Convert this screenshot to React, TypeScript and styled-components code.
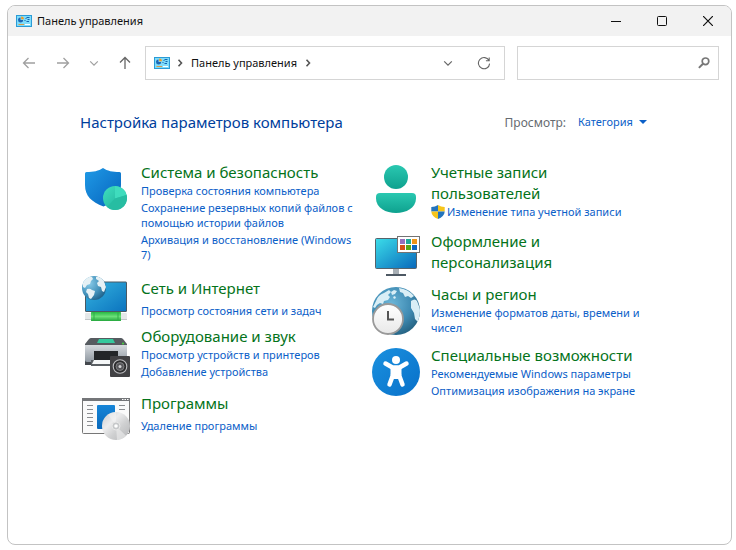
import React from "react";
import styled, { createGlobalStyle } from "styled-components";

const GlobalStyle = createGlobalStyle`
  * { box-sizing: border-box; }
  body {
    margin: 0;
    background: #ffffff;
    color: #111111;
    font-family: "Noto Sans", "Open Sans", sans-serif;
    font-size: 11px;
  }
  button, input, select { font: inherit; color: inherit; }
`;

const Window = styled.div`
  margin: 5px 4px 5px 7px;
  min-height: calc(100vh - 10px);
  border: 1px solid #c3c3c3;
  border-radius: 8px;
  overflow: hidden;
  background: #ffffff;
`;

const TitleBar = styled.header`
  display: flex;
  align-items: center;
  height: 30px;
  padding-left: 8px;
  background: #f2f2f2;
`;

const WindowTitle = styled.h1`
  flex: 1;
  margin: 0 0 0 5px;
  font-size: 11px;
  line-height: 16px;
  font-weight: 400;
`;

const CaptionButton = styled.button`
  display: grid;
  place-items: center;
  width: 46px;
  height: 30px;
  padding: 0;
  border: 0;
  background: transparent;
`;

const Toolbar = styled.div`
  display: flex;
  align-items: center;
  padding: 10px 12px 10px 7px;
`;

const NavButtons = styled.div`
  display: flex;
  align-items: center;
  gap: 6px;
  margin-right: 6px;
`;

const NavButton = styled.button<{ $narrow?: boolean; $active?: boolean }>`
  display: grid;
  place-items: center;
  width: ${(p) => (p.$narrow ? "22px" : "28px")};
  height: 28px;
  padding: 0;
  border: 0;
  background: transparent;
  color: ${(p) => (p.$active ? "#666666" : "#a0a0a0")};
`;

const AddressBar = styled.nav`
  display: flex;
  flex: 1 1 360px;
  align-items: center;
  height: 34px;
  padding: 0 6px 0 8px;
  border: 1px solid #d5d5d5;
`;

const CrumbArrow = styled.span`
  display: grid;
  place-items: center;
  width: 20px;
  color: #555555;
`;

const Crumb = styled.a`
  padding: 0 1px;
  line-height: 16px;
  color: #111111;
  text-decoration: none;
`;

const AddressActions = styled.div`
  display: flex;
  gap: 8px;
  margin-left: auto;
`;

const SearchBox = styled.label`
  display: flex;
  flex: 0 1 202px;
  align-items: center;
  height: 34px;
  margin-left: 12px;
  padding: 0 8px;
  border: 1px solid #d5d5d5;
  color: #777777;
`;

const SearchInput = styled.input`
  flex: 1;
  min-width: 0;
  border: 0;
  outline: 0;
  background: transparent;
  color: #111111;
`;

const Content = styled.main`
  max-width: 664px;
  padding: 20px 12px 24px 72px;
`;

const ContentHeader = styled.div`
  display: flex;
  align-items: center;
  justify-content: space-between;
  min-height: 24px;
  margin-bottom: 28px;
  padding-right: 13px;
`;

const Heading = styled.h2`
  margin: 0;
  color: #003e9c;
  font-size: 15px;
  line-height: 24px;
  font-weight: 400;
`;

const ViewPicker = styled.label`
  display: flex;
  align-items: center;
  gap: 12px;
  color: #666b70;
  font-size: 12px;
`;

const ViewSelectWrap = styled.span`
  display: flex;
  align-items: center;
  gap: 6px;
  color: #0b60c8;
  font-size: 11px;
`;

const ViewSelect = styled.select`
  appearance: none;
  padding: 0;
  border: 0;
  background: transparent;
  line-height: 16px;
`;

const Columns = styled.div`
  display: grid;
  grid-template-columns: repeat(2, minmax(0, 290px));
  align-items: start;
`;

const Column = styled.div`
  display: flex;
  flex-direction: column;
`;

const CategoryRow = styled.section<{ $centered?: boolean; $after: number }>`
  display: flex;
  align-items: ${(p) => (p.$centered ? "center" : "flex-start")};
  gap: 9px;
  margin-bottom: ${(p) => p.$after}px;
  padding-right: 8px;
`;

const IconSlot = styled.div<{ $flush?: boolean }>`
  flex: none;
  width: 52px;
  margin-top: ${(p) => (p.$flush ? "0" : "3px")};
  height: 48px;
  svg { display: block; margin: 0 auto; }
`;

const CategoryText = styled.div`
  min-width: 0;
`;

const CategoryTitle = styled.h3`
  margin: 0;
  font-size: 15px;
  line-height: 21px;
  font-weight: 400;
`;

const TitleLink = styled.a`
  color: #04731a;
  text-decoration: none;
`;

const TaskList = styled.ul<{ $spaced?: boolean }>`
  display: grid;
  gap: 2px;
  margin: ${(p) => (p.$spaced ? "4px" : "0")} 0 0;
  padding: 0;
  list-style: none;
`;

const Task = styled.li`
  display: flex;
  align-items: center;
  gap: 2px;
  line-height: 15px;
`;

const TaskLink = styled.a`
  color: #0b60c8;
  text-decoration: none;
`;

const PanelIcon = () => (
  <svg width="16" height="12" viewBox="0 0 16 12" aria-hidden="true">
    <rect width="16" height="12" fill="#2a9bd6" />
    <rect x="1" y="1" width="14" height="10" fill="#7fdcfa" />
    <path d="M4.500 2.400a2.600 2.600 0 1 0 2.700 2.700H4.500z" fill="#1c67b5" />
    <path d="M5.200 1.600v2.700h2.700A2.700 2.700 0 0 0 5.200 1.600z" fill="#f39a1f" />
    <path d="M8.500 5.500h1M9.500 3.500h1M10.500 2.500h3M11.500 4.500h2M10.500 6.500h2.500" stroke="#1466b0" />
    <path d="M2.500 9.500H8" stroke="#d99a45" />
    <path d="M9 9.500h5" stroke="#ffffff" />
  </svg>
);

const Chevron = ({ down }: { down?: boolean }) => (
  <svg width="10" height="10" viewBox="0 0 10 10" fill="none" stroke="currentColor" strokeWidth={down ? 1.2 : 1.6} aria-hidden="true">
    <path d={down ? "M1.200 3.300 5 7.100l3.800-3.800" : "m3.500 1.800 3 3.200-3 3.200"} />
  </svg>
);

const Arrow = ({ dir }: { dir: "left" | "right" | "up" }) => (
  <svg width="14" height="14" viewBox="0 0 14 14" fill="none" stroke="currentColor" strokeWidth="1.300" aria-hidden="true">
    {dir === "left" && <path d="M13 7H1.500M6.500 2l-5 5 5 5" />}
    {dir === "right" && <path d="M1 7h11.500M7.500 2l5 5-5 5" />}
    {dir === "up" && <path d="M7 13V1.500M2 6.500l5-5 5 5" />}
  </svg>
);

const RefreshIcon = () => (
  <svg width="14" height="14" viewBox="0 0 14 14" fill="none" stroke="currentColor" strokeWidth="1.100" aria-hidden="true">
    <path d="M12 4.600A5.600 5.600 0 1 0 12.600 7.600M12.200 1.500v3.300H8.900" />
  </svg>
);

const MagnifierIcon = () => (
  <svg width="12" height="12" viewBox="0 0 12 12" fill="none" stroke="currentColor" aria-hidden="true">
    <circle cx="7.500" cy="4.300" r="3.300" strokeWidth="1.700" />
    <path d="M5 6.800.900 10.900" strokeWidth="2" />
  </svg>
);

const ShieldIcon = () => (
  <svg width="48" height="48" viewBox="0 0 48 48" aria-hidden="true">
    <defs>
      <linearGradient id="shieldBlue" x1="0" y1="0" x2="1" y2="1">
        <stop offset="0" stopColor="#1f9ae6" /><stop offset="1" stopColor="#0663bd" />
      </linearGradient>
      <linearGradient id="discTeal" x1="0" y1="0" x2="1" y2="1">
        <stop offset="0" stopColor="#3fe0c0" /><stop offset="1" stopColor="#1cab95" />
      </linearGradient>
    </defs>
    <path d="M21 3c4.500 3 9.500 4 16.500 4q1.500 0 1.500 1.500V20C39 31 32.500 37 21.500 41.500 9.500 37 3 31 3 20V8.500Q3 7 4.500 7C11.500 7 16.500 6 21 3z" fill="url(#shieldBlue)" />
    <circle cx="33" cy="33" r="12" fill="url(#discTeal)" />
    <path d="M33 21a12 12 0 0 1 11.600 9L33 33.500z" fill="#3fdcbd" />
    <path d="M33 33.500 44.600 30A12 12 0 0 1 25 42z" fill="#27bda2" />
  </svg>
);

const NetworkIcon = () => (
  <svg width="48" height="48" viewBox="0 0 48 48" aria-hidden="true">
    <defs>
      <linearGradient id="screenBlue" x1="0" y1="0" x2="1" y2="1">
        <stop offset="0" stopColor="#35b4e0" /><stop offset="1" stopColor="#0b73be" />
      </linearGradient>
      <radialGradient id="globeSmall" cx=".3" cy=".3" r=".8">
        <stop offset="0" stopColor="#8accea" /><stop offset=".6" stopColor="#4391ba" /><stop offset="1" stopColor="#1d5f88" />
      </radialGradient>
      <linearGradient id="cableGreen" x1="0" y1="0" x2="0" y2="1">
        <stop offset="0" stopColor="#27b944" /><stop offset=".5" stopColor="#6be078" /><stop offset="1" stopColor="#25a73d" />
      </linearGradient>
      <clipPath id="globeSmallClip"><circle cx="12" cy="14" r="12" /></clipPath>
    </defs>
    <rect x="3.500" y="8" width="41" height="29.500" rx=".5" fill="url(#screenBlue)" stroke="#4a5963" />
    <circle cx="12" cy="14" r="12" fill="url(#globeSmall)" />
    <g clipPath="url(#globeSmallClip)" fill="#e6f1f5">
      <path d="M1 8q2-4 6-5.500l3 .5 1 2-2 2-1 3-3 1-2 3-2-1z" />
      <path d="M5 15q3-1 5 1l3 1-1 4-3 4-2-1-1-4-2-2z" />
      <path d="M14 3q5-1 8 4l2 6-2 5-2-1-1-4-3-1-1-3 2-2-3-2z" />
    </g>
    <rect x="3" y="39" width="42" height="7" rx="1" fill="#e5e8e9" />
    <path d="M3 45.500h42" stroke="#c2c7c9" />
    <rect x="9" y="38" width="30" height="9" rx=".5" fill="url(#cableGreen)" />
    <path d="M12 38v9M36 38v9" stroke="#2fae47" />
  </svg>
);

const PrinterIcon = () => (
  <svg width="48" height="48" viewBox="0 0 48 48" aria-hidden="true">
    <defs>
      <linearGradient id="printerBody" x1="0" y1="0" x2="0" y2="1">
        <stop offset="0" stopColor="#d6dade" /><stop offset="1" stopColor="#8f98a1" />
      </linearGradient>
    </defs>
    <path d="M3 31h42v5H3z" fill="#44484d" />
    <path d="M9 9h30q1 0 2 1l4 5v2H3v-2l4-5q1-1 2-1z" fill="#565b60" />
    <path d="M17 10h14l2 4H15z" fill="#36c99d" />
    <path d="M3 16h42v15q0 2-2 2H5q-2 0-2-2z" fill="url(#printerBody)" />
    <circle cx="41" cy="14.500" r="1" fill="#47d93c" />
    <path d="M12 22h24v9H12z" fill="#232629" />
    <path d="M9 31h27v6H9z" fill="#5a5f64" />
    <path d="m12 31-2 4h20v-4z" fill="#f5f7f8" />
    <rect x="28" y="27" width="20" height="21" rx="1" fill="#414144" />
    <circle cx="38" cy="37.500" r="6.800" fill="#2c2c2e" stroke="#bdbdc0" strokeWidth="1.100" />
    <circle cx="38" cy="37.500" r="4" fill="#56565a" stroke="#8b8b8e" strokeWidth=".8" />
    <circle cx="38" cy="37.500" r="1.500" fill="#d4d4d6" />
  </svg>
);

const ProgramsIcon = () => (
  <svg width="48" height="48" viewBox="0 0 48 48" aria-hidden="true">
    <defs>
      <linearGradient id="discSilver" x1="0" y1="0" x2="1" y2="1">
        <stop offset="0" stopColor="#c9cacc" /><stop offset=".35" stopColor="#ececed" /><stop offset=".6" stopColor="#cfd0d1" /><stop offset="1" stopColor="#b4b5b7" />
      </linearGradient>
      <linearGradient id="programBlue" x1="0" y1="0" x2="0" y2="1">
        <stop offset="0" stopColor="#1685d8" /><stop offset="1" stopColor="#0969bb" />
      </linearGradient>
    </defs>
    <rect x=".5" y="2.500" width="47" height="35" rx="1" fill="#fafafa" stroke="#777777" />
    <path d="M0 2h48v3H0z" fill="#747679" />
    <path d="M40 3.500h1.500m1 0H44m1 0h1.500" stroke="#ffffff" />
    <path d="M5 9.500h6M5 13.500h6M5 17.500h6M5 21.500h6M5 25.500h6M5 29.500h6M37 9.500h6M37 13.500h6" stroke="#8b8d90" />
    <rect x="15" y="9" width="18" height="24" rx="1" fill="url(#programBlue)" />
    <circle cx="34" cy="30" r="14" fill="url(#discSilver)" />
    <path d="m34 30-8-11.500A14 14 0 0 1 34 16zM34 30l10 9.800A14 14 0 0 1 35 44z" fill="#f5f5f5" opacity=".5" />
    <circle cx="34" cy="30" r="4" fill="#c6c8ca" stroke="#e8e8e8" />
    <circle cx="34" cy="30" r="1.800" fill="#ffffff" />
  </svg>
);

const UserIcon = () => (
  <svg width="48" height="48" viewBox="0 0 48 48" aria-hidden="true">
    <defs>
      <linearGradient id="userTeal" x1="0" y1="0" x2="0" y2="1">
        <stop offset="0" stopColor="#2ac8b1" /><stop offset="1" stopColor="#0ea18e" />
      </linearGradient>
    </defs>
    <circle cx="24" cy="12" r="12" fill="url(#userTeal)" />
    <path d="M8 28h32q4 0 4 4v1.500C44 43 34 48 24 48S4 43 4 33.500V32q0-4 4-4z" fill="url(#userTeal)" />
  </svg>
);

const DisplayIcon = () => (
  <svg width="48" height="48" viewBox="0 0 48 48" aria-hidden="true">
    <defs>
      <linearGradient id="displayBlue" x1="0" y1="0" x2="1" y2="1">
        <stop offset="0" stopColor="#3bdde9" /><stop offset="1" stopColor="#0868bb" />
      </linearGradient>
    </defs>
    <rect x="3.500" y="4.500" width="41" height="30" rx="1" fill="url(#displayBlue)" stroke="#56636b" />
    <path d="M21 35h6v5h-6z" fill="#a8afb5" />
    <path d="M14 40h20v2H14z" fill="#4e5964" />
    <rect x="25.500" y="2.500" width="22" height="16" fill="#ffffff" stroke="#737373" />
    <path d="M28 5h5v5h-5z" fill="#9670bd" /><path d="M34 5h5v5h-5z" fill="#20a99a" /><path d="M40 5h5v5h-5z" fill="#ee9419" />
    <path d="M28 11h5v5h-5z" fill="#d65116" /><path d="M34 11h5v5h-5z" fill="#59a814" /><path d="M40 11h5v5h-5z" fill="#0d68c1" />
  </svg>
);

const ClockIcon = () => (
  <svg width="48" height="48" viewBox="0 0 48 48" aria-hidden="true">
    <defs>
      <radialGradient id="globeLarge" cx=".4" cy=".35" r=".7">
        <stop offset="0" stopColor="#6cb6d8" /><stop offset=".6" stopColor="#3f8bb3" /><stop offset="1" stopColor="#24607f" />
      </radialGradient>
      <linearGradient id="clockFace" x1="0" y1="0" x2="0" y2="1">
        <stop offset="0" stopColor="#ffffff" /><stop offset="1" stopColor="#e8e8e8" />
      </linearGradient>
      <clipPath id="globeLargeClip"><circle cx="24" cy="24" r="24" /></clipPath>
    </defs>
    <circle cx="24" cy="24" r="24" fill="url(#globeLarge)" />
    <g clipPath="url(#globeLargeClip)" fill="#d9eef6">
      <path d="M4 14q2-6 8-8l5-3 2 2-3 3 2 2-2 3-4 1-1 3-3-1-3 2-2 3-2-1z" />
      <path d="m19 5 3-2 3 1-2 3-3 1zM21 10l2-1 1 2-2 1z" />
      <path d="M27 1q9 1 15 8l-3 2-3-2-3 1-2-4-3-1z" />
      <path d="M39 14q4-3 6 0l3 8v6l-2 7-3-3-1-6-3-5z" />
    </g>
    <circle cx="16" cy="32" r="15" fill="url(#clockFace)" stroke="#999999" strokeWidth="1.800" />
    <path d="M16 24v8.500h6" fill="none" stroke="#555555" strokeWidth="2" />
  </svg>
);

const AccessIcon = () => (
  <svg width="48" height="48" viewBox="0 0 48 48" aria-hidden="true">
    <defs>
      <linearGradient id="accessBlue" x1="0" y1="0" x2="1" y2="1">
        <stop offset="0" stopColor="#1b91df" /><stop offset="1" stopColor="#0870c9" />
      </linearGradient>
    </defs>
    <circle cx="24" cy="24" r="24" fill="url(#accessBlue)" />
    <circle cx="24" cy="12" r="4" fill="#ffffff" />
    <path d="m13.500 15.500 7 4h7l7-4M21 27l-3.500 9.500M27 27l3.500 9.500" fill="none" stroke="#ffffff" strokeWidth="4.500" strokeLinecap="round" strokeLinejoin="round" />
    <path d="M18.500 18h11v9l-3 4h-5l-3-4z" fill="#ffffff" />
  </svg>
);

const UacShield = () => (
  <svg width="14" height="14" viewBox="0 0 14 14" aria-hidden="true">
    <path d="M7 0C5 1.300 3 1.900.300 2v4.500H7z" fill="#2374bd" />
    <path d="M7 0c2 1.300 4 1.900 6.700 2v4.500H7z" fill="#f6c51b" />
    <path d="M.300 6.500C.500 10 3 12.500 7 14V6.500z" fill="#f6c51b" />
    <path d="M13.700 6.500C13.500 10 11 12.500 7 14V6.500z" fill="#2374bd" />
  </svg>
);

type CategoryProps = {
  icon: React.ReactNode;
  title: string;
  tasks?: string[];
  centered?: boolean;
  spaced?: boolean;
  elevated?: boolean;
  after?: number;
};

const Category = ({ icon, title, tasks = [], centered, spaced, elevated, after = 12 }: CategoryProps) => (
  <CategoryRow $centered={centered} $after={after}>
    <IconSlot $flush={centered}>{icon}</IconSlot>
    <CategoryText>
      <CategoryTitle><TitleLink href="#">{title}</TitleLink></CategoryTitle>
      {tasks.length > 0 && (
        <TaskList $spaced={spaced}>
          {tasks.map((task) => (
            <Task key={task}>
              {elevated && <UacShield />}
              <TaskLink href="#">{task}</TaskLink>
            </Task>
          ))}
        </TaskList>
      )}
    </CategoryText>
  </CategoryRow>
);

export default function App() {
  return (
    <>
      <GlobalStyle />
      <Window>
        <TitleBar>
          <PanelIcon />
          <WindowTitle>Панель управления</WindowTitle>
          <CaptionButton aria-label="Свернуть">
            <svg width="10" height="10" viewBox="0 0 10 10"><path d="M0 5.500h10" stroke="#111111" /></svg>
          </CaptionButton>
          <CaptionButton aria-label="Развернуть">
            <svg width="10" height="10" viewBox="0 0 10 10"><rect x=".5" y=".5" width="9" height="9" rx="1" fill="none" stroke="#111111" /></svg>
          </CaptionButton>
          <CaptionButton aria-label="Закрыть">
            <svg width="10" height="10" viewBox="0 0 10 10"><path d="m0 0 10 10M10 0 0 10" stroke="#111111" strokeWidth="1.200" /></svg>
          </CaptionButton>
        </TitleBar>
        <Toolbar>
          <NavButtons>
            <NavButton aria-label="Назад"><Arrow dir="left" /></NavButton>
            <NavButton aria-label="Вперед"><Arrow dir="right" /></NavButton>
            <NavButton $narrow aria-label="Последние расположения"><Chevron down /></NavButton>
            <NavButton $active aria-label="Вверх"><Arrow dir="up" /></NavButton>
          </NavButtons>
          <AddressBar aria-label="Адрес">
            <PanelIcon />
            <CrumbArrow><Chevron /></CrumbArrow>
            <Crumb href="#">Панель управления</Crumb>
            <CrumbArrow><Chevron /></CrumbArrow>
            <AddressActions>
              <NavButton $active aria-label="Предыдущие расположения"><Chevron down /></NavButton>
              <NavButton $active aria-label="Обновить"><RefreshIcon /></NavButton>
            </AddressActions>
          </AddressBar>
          <SearchBox>
            <SearchInput type="search" aria-label="Поиск" />
            <MagnifierIcon />
          </SearchBox>
        </Toolbar>
        <Content>
          <ContentHeader>
            <Heading>Настройка параметров компьютера</Heading>
            <ViewPicker>
              Просмотр:
              <ViewSelectWrap>
                <ViewSelect><option>Категория</option></ViewSelect>
                <svg width="8" height="4" viewBox="0 0 8 4" aria-hidden="true"><path d="M0 0h8L4 4z" fill="currentColor" /></svg>
              </ViewSelectWrap>
            </ViewPicker>
          </ContentHeader>
          <Columns>
            <Column>
              <Category
                icon={<ShieldIcon />}
                title="Система и безопасность"
                tasks={[
                  "Проверка состояния компьютера",
                  "Сохранение резервных копий файлов с помощью истории файлов",
                  "Архивация и восстановление (Windows 7)",
                ]}
              />
              <Category icon={<NetworkIcon />} title="Сеть и Интернет" tasks={["Просмотр состояния сети и задач"]} centered spaced after={4} />
              <Category icon={<PrinterIcon />} title="Оборудование и звук" tasks={["Просмотр устройств и принтеров", "Добавление устройства"]} after={14} />
              <Category icon={<ProgramsIcon />} title="Программы" tasks={["Удаление программы"]} spaced />
            </Column>
            <Column>
              <Category icon={<UserIcon />} title="Учетные записи пользователей" tasks={["Изменение типа учетной записи"]} elevated />
              <Category icon={<DisplayIcon />} title="Оформление и персонализация" after={2} />
              <Category icon={<ClockIcon />} title="Часы и регион" tasks={["Изменение форматов даты, времени и чисел"]} after={10} />
              <Category icon={<AccessIcon />} title="Специальные возможности" tasks={["Рекомендуемые Windows параметры", "Оптимизация изображения на экране"]} />
            </Column>
          </Columns>
        </Content>
      </Window>
    </>
  );
}
